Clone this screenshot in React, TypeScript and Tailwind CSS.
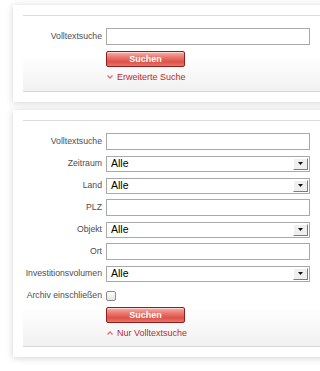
import React from 'react';

const font = { fontFamily: '"Liberation Sans", Arial, sans-serif' };

function Label({ children }: { children: React.ReactNode }) {
  return (
    <span className="w-[79px] shrink-0 text-right text-[8.7px] leading-none text-[#4d4d4d] whitespace-nowrap">
      {children}
    </span>
  );
}

function TextRow({ label }: { label: string }) {
  return (
    <div className="flex h-[22px] items-center gap-[4px]">
      <Label>{label}</Label>
      <div className="h-[17px] w-[204px] border border-[#a9a9a9] bg-white" />
    </div>
  );
}

function SelectRow({ label }: { label: string }) {
  return (
    <div className="flex h-[22px] items-center gap-[4px]">
      <Label>{label}</Label>
      <div className="flex h-[16px] w-[204px] items-center border border-[#a9a9a9] bg-white">
        <span className="flex-1 pl-[4px] text-[10.5px] leading-none text-black">Alle</span>
        <div className="mr-[1px] flex h-[12px] w-[15px] items-center justify-center border-t border-l border-t-white border-l-white border-r border-b border-r-[#7d7d7d] border-b-[#7d7d7d] bg-[#efefef]">
          <svg width="5" height="3" viewBox="0 0 5 3">
            <path d="M0 0h5L2.5 3z" fill="#111" />
          </svg>
        </div>
      </div>
    </div>
  );
}

function SearchButton() {
  return (
    <button className="flex h-[16px] w-[79px] items-center justify-center rounded-[2px] border border-[#8e1f1a] bg-[linear-gradient(to_bottom,#f7b3ad_0%,#ec7a72_35%,#dd5249_70%,#ea736b_100%)] text-[9px] font-bold leading-none text-white shadow-[inset_0_1px_0_rgba(255,255,255,0.5)]">
      Suchen
    </button>
  );
}

function ToggleLink({ up, text }: { up?: boolean; text: string }) {
  return (
    <div className="flex h-[12px] items-center gap-[4px] text-[9px] leading-none text-[#c1272d]">
      <svg width="6" height="4" viewBox="0 0 6 4" className="ml-[1px]">
        <path
          d={up ? 'M0.5 3.5L3 1l2.5 2.5' : 'M0.5 0.5L3 3l2.5-2.5'}
          fill="none"
          stroke="#e07070"
          strokeWidth="1.3"
        />
      </svg>
      <span>{text}</span>
    </div>
  );
}

function Panel({ children }: { children: React.ReactNode }) {
  return (
    <div className="ml-[13px] w-[330px] bg-white pt-[10px] pb-[10px] pl-[10px] shadow-[0_1px_7px_rgba(0,0,0,0.18)]">
      <div className="h-px bg-[#dcdcdc]" />
      {children}
      <div className="h-px bg-[#d6d6d6]" />
    </div>
  );
}

export default function App() {
  return (
    <div className="h-[371px] w-[320px] overflow-hidden bg-white pt-[5px]" style={font}>
      <Panel>
        <div className="mt-[9.5px]">
          <TextRow label="Volltextsuche" />
        </div>
        <div className="bg-[linear-gradient(to_bottom,#ffffff_0%,#ffffff_20%,#f1f1f1_100%)] pl-[83px] pt-[3.5px] pb-[8px]">
          <SearchButton />
          <div className="mt-[4px]">
            <ToggleLink text="Erweiterte Suche" />
          </div>
        </div>
      </Panel>

      <div className="h-[8px]" />

      <Panel>
        <div className="mt-[9.5px] flex flex-col">
          <TextRow label="Volltextsuche" />
          <SelectRow label="Zeitraum" />
          <SelectRow label="Land" />
          <TextRow label="PLZ" />
          <SelectRow label="Objekt" />
          <TextRow label="Ort" />
          <SelectRow label="Investitionsvolumen" />
          <div className="flex h-[22px] items-center gap-[4px]">
            <Label>Archiv einschließen</Label>
            <div className="mt-[1px] h-[10px] w-[10px] rounded-[2px] border border-[#8a8a8a] bg-[linear-gradient(to_bottom,#ffffff,#e4e4e4)]" />
          </div>
        </div>
        <div className="bg-[linear-gradient(to_bottom,#ffffff_0%,#f1f1f1_100%)] pl-[83px] pt-[0.5px] pb-[7px]">
          <SearchButton />
          <div className="mt-[4px]">
            <ToggleLink up text="Nur Volltextsuche" />
          </div>
        </div>
      </Panel>
    </div>
  );
}
